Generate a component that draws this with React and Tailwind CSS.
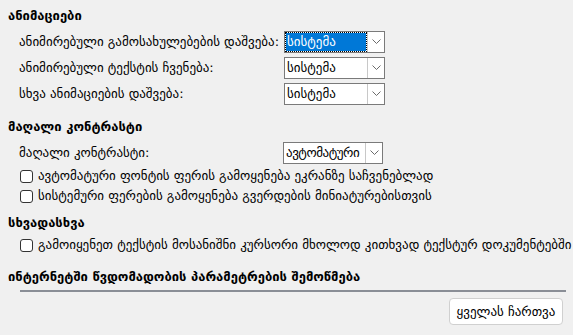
import React from "react";

const font = { fontFamily: '"DejaVu Sans", "Noto Sans", sans-serif' };

function Chevron() {
  return (
    <svg width="9" height="6" viewBox="0 0 9 6" fill="none">
      <path d="M0.5 0.5 L4.5 4.5 L8.5 0.5" stroke="#6b6b6b" strokeWidth="1" />
    </svg>
  );
}

function Select({ value, focused, tight, w = "w-[101px]" }) {
  return (
    <div className={`flex h-[22px] ${w} border border-[#7a7a7a] bg-white`}>
      <div className={`flex-1 min-w-0 flex items-center px-[1px] ${focused ? "p-[1px]" : ""}`}>
        <div
          className={`flex h-full w-full items-center overflow-hidden whitespace-nowrap pl-[1px] ${
            tight ? "tracking-[-0.45px]" : ""
          } ${focused ? "bg-[#0078d7] text-white outline-1 outline-dotted outline-black" : "text-black"}`}
        >
          {value}
        </div>
      </div>
      <div className="flex w-[17px] shrink-0 items-center justify-center border-l border-[#c8c8c8]">
        <Chevron />
      </div>
    </div>
  );
}

function Row({ label, value, focused }) {
  return (
    <div className="flex h-[22px] items-center pl-[11px]">
      <div className="w-[265px]">{label}</div>
      <Select value={value} focused={focused} />
    </div>
  );
}

function Check({ label }) {
  return (
    <div className="flex h-[20px] items-center gap-[5px] pl-[12px]">
      <div className="h-[13px] w-[13px] rounded-[3px] border border-[#333] bg-white" />
      <span>{label}</span>
    </div>
  );
}

function Heading({ children }) {
  return <div className="font-bold text-[13px] h-[18px] flex items-center">{children}</div>;
}

export default function App() {
  return (
    <div
      className="h-[335px] w-[573px] overflow-hidden bg-[#f0f0f0] text-[13px] text-black pl-[8px] pt-[7px]"
      style={font}
    >
      <Heading>ანიმაციები</Heading>
      <div className="mt-[6px] flex flex-col gap-[4px]">
        <Row label="ანიმირებული გამოსახულებების დაშვება:" value="სისტემა" focused />
        <Row label="ანიმირებული ტექსტის ჩვენება:" value="სისტემა" />
        <Row label="სხვა ანიმაციების დაშვება:" value="სისტემა" />
      </div>

      <div className="mt-[13px]">
        <Heading>მაღალი კონტრასტი</Heading>
      </div>
      <div className="mt-[6px] flex flex-col">
        <div className="flex h-[21px] items-center pl-[11px]">
          <div className="w-[264px]">მაღალი კონტრასტი:</div>
          <Select value="ავტომატური" w="w-[100px]" tight />
        </div>
        <div className="mt-[3px] flex flex-col">
          <Check label="ავტომატური ფონტის ფერის გამოყენება ეკრანზე საჩვენებლად" />
          <Check label="სისტემური ფერების გამოყენება გვერდების მინიატურებისთვის" />
        </div>
      </div>

      <div className="mt-[8px]">
        <Heading>სხვადასხვა</Heading>
      </div>
      <div className="mt-[3px]">
        <Check label="გამოიყენეთ ტექსტის მოსანიშნი კურსორი მხოლოდ კითხვად ტექსტურ დოკუმენტებში" />
      </div>

      <div className="mt-[13px]">
        <Heading>ინტერნეტში წვდომადობის პარამეტრების შემოწმება</Heading>
      </div>
      <div className="ml-[12px] mr-[7px] mt-[4px] h-[2px] bg-[#8a8e96]" />
      <div className="mt-[6px] flex justify-end pr-[10px]">
        <button className="h-[27px] w-[114px] rounded-[4px] border border-[#d0d0d0] bg-white text-[13px]">
          ყველას ჩართვა
        </button>
      </div>
    </div>
  );
}
